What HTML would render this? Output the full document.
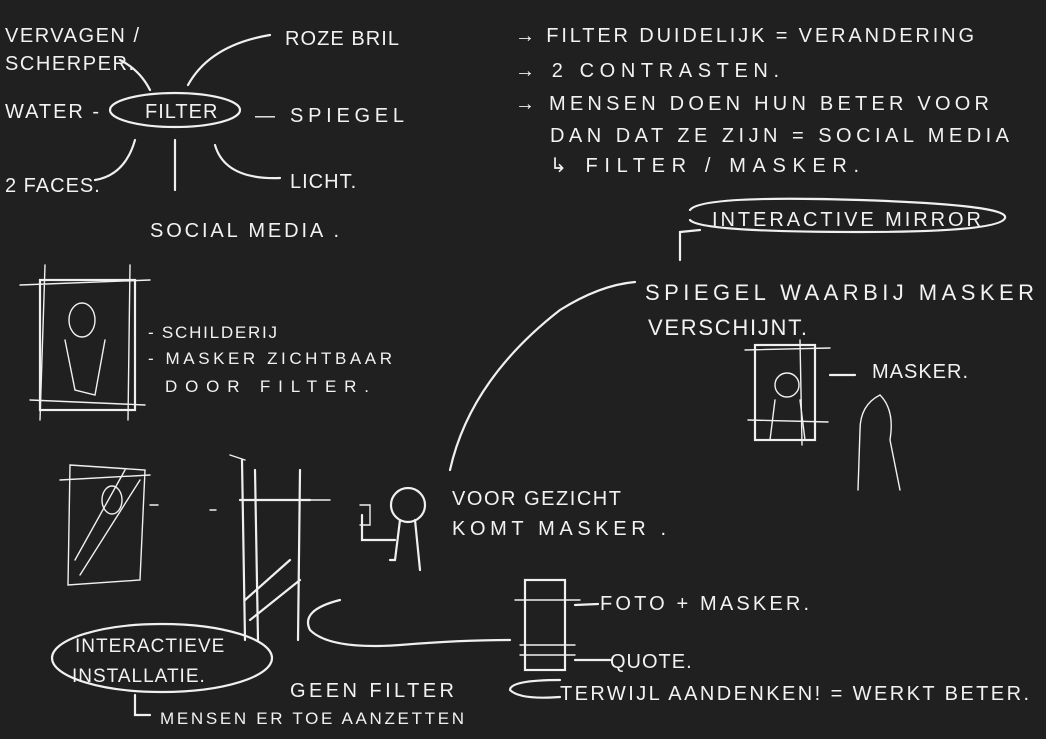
<!DOCTYPE html>
<html><head><meta charset="utf-8"><style>
html,body{margin:0;padding:0;background:#202020;}
svg{display:block}
text{fill:#f2f2f2;font-family:"Liberation Sans",sans-serif;font-size:20px;letter-spacing:1px}
.s{stroke:#f0f0f0;stroke-width:2.2;fill:none;stroke-linecap:round}
.t{stroke:#f0f0f0;stroke-width:1.4;fill:none;stroke-linecap:round}
</style></head><body>
<svg width="1046" height="739" viewBox="0 0 1046 739">
<rect width="1046" height="739" fill="#202020"/>
<text x="5" y="42" textLength="135">VERVAGEN /</text>
<text x="5" y="70" textLength="130">SCHERPER.</text>
<text x="285" y="45" textLength="115">ROZE BRIL</text>
<text x="5" y="118" textLength="95">WATER -</text>
<ellipse cx="175" cy="110" rx="65" ry="17" class="s"/>
<text x="145" y="118">FILTER</text>
<text x="255" y="122" textLength="150">— SPIEGEL</text>
<text x="5" y="192">2 FACES.</text>
<text x="290" y="188">LICHT.</text>
<text x="150" y="237" textLength="190">SOCIAL MEDIA .</text>
<path class="s" d="M120 60 Q140 70 150 90"/>
<path class="s" d="M270 35 Q210 45 188 85"/>
<path class="s" d="M135 140 Q125 175 95 180"/>
<path class="s" d="M175 140 L175 190"/>
<path class="s" d="M215 145 Q225 180 280 178"/>
<text x="515" y="42" textLength="460">→ FILTER DUIDELIJK = VERANDERING</text>
<text x="515" y="77" textLength="265">→ 2 CONTRASTEN.</text>
<text x="515" y="110" textLength="475">→ MENSEN DOEN HUN BETER VOOR</text>
<text x="550" y="142" textLength="460">DAN DAT ZE ZIJN = SOCIAL MEDIA</text>
<text x="550" y="172" textLength="310">↳ FILTER / MASKER.</text>
<path class="s" d="M690 210 Q700 195 860 200 Q1010 205 1005 218 Q1000 232 860 232 Q700 232 690 220"/>
<text x="712" y="226" textLength="270">INTERACTIVE MIRROR</text>
<path class="s" d="M700 230 L680 232 L680 260"/>
<text x="645" y="300" style="font-size:22px" textLength="390">SPIEGEL WAARBIJ MASKER</text>
<text x="648" y="335" style="font-size:22px" textLength="160">VERSCHIJNT.</text>
<rect x="755" y="345" width="60" height="95" class="s"/>
<path class="t" d="M745 350 L830 348 M748 420 L828 422 M800 340 L802 445"/>
<circle cx="787" cy="385" r="12" class="t"/>
<path class="t" d="M775 400 L770 440 M800 400 L805 440"/>
<text x="872" y="378">MASKER.</text>
<path class="s" d="M855 375 L830 375"/>
<path class="t" d="M880 395 Q860 405 860 430 L858 490 M880 395 Q895 410 890 440 L900 490"/>
<rect x="40" y="280" width="95" height="130" class="s"/>
<path class="t" d="M20 285 L150 280 M30 400 L145 405 M45 265 L40 420 M130 265 L128 420"/>
<ellipse cx="82" cy="320" rx="13" ry="17" class="t"/>
<path class="t" d="M65 340 L75 390 L95 395 L105 340"/>
<text x="148" y="338" style="font-size:17px" textLength="130">- SCHILDERIJ</text>
<text x="148" y="364" style="font-size:17px" textLength="245">- MASKER ZICHTBAAR</text>
<text x="165" y="392" style="font-size:17px" textLength="205">DOOR FILTER.</text>
<path class="t" d="M70 465 L145 470 L140 580 L68 585 Z M60 480 L150 475 M80 575 L140 480 M75 560 L125 470"/>
<ellipse cx="112" cy="500" rx="10" ry="14" class="t"/>
<path class="t" d="M150 505 L158 505 M210 510 L216 510"/>
<path class="s" d="M242 460 L245 640 M255 470 L258 640 M300 470 L298 640 M240 500 L310 500 M245 600 L290 560 M250 620 L300 580"/>
<path class="t" d="M230 455 L245 460 M310 500 L330 500"/>
<circle cx="408" cy="505" r="17" class="s"/>
<path class="s" d="M400 520 L395 560 L390 560 M362 515 L362 540 L395 540 M415 520 L420 570"/>
<path class="t" d="M360 505 L370 505 L370 525 L360 525"/>
<text x="452" y="505" textLength="170">VOOR GEZICHT</text>
<text x="452" y="535" textLength="215">KOMT MASKER .</text>
<path class="s" d="M450 470 Q470 380 560 310 Q600 285 635 282"/>
<path class="s" d="M340 600 Q300 610 310 630 Q330 650 400 645 Q460 640 510 640"/>
<rect x="525" y="580" width="40" height="90" class="s"/>
<path class="t" d="M515 600 L580 600 M520 645 L575 645 M520 655 L575 655"/>
<text x="600" y="610" textLength="210">FOTO + MASKER.</text>
<text x="610" y="668">QUOTE.</text>
<path class="s" d="M575 605 L598 604 M575 660 L610 660"/>
<path class="s" d="M560 680 Q510 680 510 690 Q520 700 560 697"/>
<text x="560" y="700" textLength="470">TERWIJL AANDENKEN! = WERKT BETER.</text>
<ellipse cx="162" cy="658" rx="110" ry="34" class="s"/>
<text x="75" y="652" style="font-size:19px">INTERACTIEVE</text>
<text x="72" y="682" style="font-size:19px">INSTALLATIE.</text>
<path class="s" d="M135 695 L135 715 L150 715"/>
<text x="160" y="724" style="font-size:17px" textLength="305">MENSEN ER TOE AANZETTEN</text>
<text x="290" y="697" textLength="165">GEEN FILTER</text>
</svg>
</body></html>
